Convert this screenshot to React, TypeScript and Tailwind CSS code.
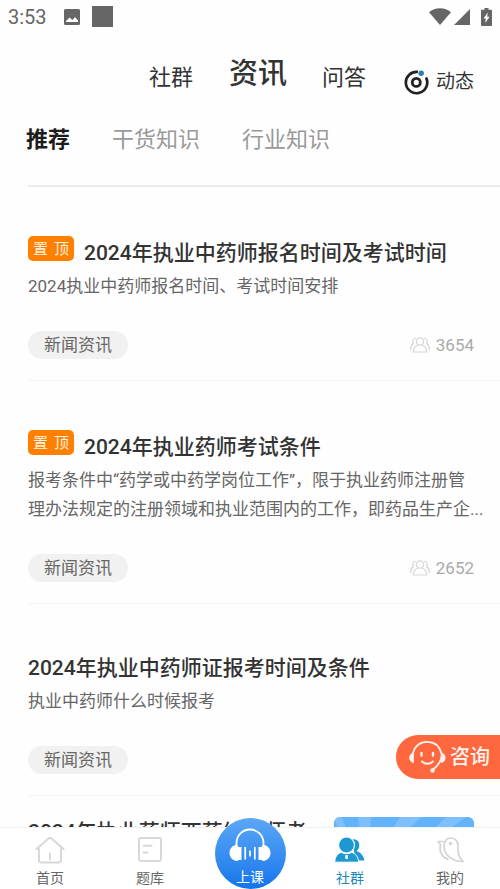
import React from 'react';

const articles = [
  {
    pinned: true,
    title: '2024年执业中药师报名时间及考试时间',
    desc: '2024执业中药师报名时间、考试时间安排',
    views: 3654,
  },
  {
    pinned: true,
    title: '2024年执业药师考试条件',
    desc: '报考条件中“药学或中药学岗位工作”，限于执业药师注册管\n理办法规定的注册领域和执业范围内的工作，即药品生产企...',
    views: 2652,
  },
  {
    pinned: false,
    title: '2024年执业中药师证报考时间及条件',
    desc: '执业中药师什么时候报考',
    views: null,
  },
];

function StatusBar() {
  return (
    <div className="flex h-8 items-center px-2 pt-px text-[#666]">
      <span className="text-xl leading-8">3:53</span>
      <svg className="ml-[17px] h-4 w-4" viewBox="0 0 16 16" fill="currentColor">
        <path fillRule="evenodd" d="M1.500 0h13A1.500 1.500 0 0 1 16 1.500v13a1.500 1.500 0 0 1-1.500 1.500h-13A1.500 1.500 0 0 1 0 14.500v-13A1.500 1.500 0 0 1 1.500 0zM2 13h12v-1.500L11 8 8.500 11 5.500 8.500 2 12z" />
      </svg>
      <span className="ml-3 h-[21px] w-[21px] bg-[#666]" />
      <div className="ml-auto flex items-center">
        <svg className="h-[17px] w-[22px]" viewBox="0 0 22 17" fill="currentColor">
          <path d="M0 4.200C6-1.200 16-1.200 22 4.200L11 17z" />
        </svg>
        <svg className="ml-[3px] h-4 w-4" viewBox="0 0 16 16" fill="currentColor">
          <path d="M16 0v16H0z" />
        </svg>
        <svg className="ml-[11px] h-[18px] w-[11px]" viewBox="0 0 11 18">
          <path fill="currentColor" d="M3.500 0h4v1.800H10a1 1 0 0 1 1 1V17a1 1 0 0 1-1 1H1a1 1 0 0 1-1-1V2.800a1 1 0 0 1 1-1h2.500z" />
          <path fill="#fff" d="M6.800 4.500 2.500 10.500h2.300L4.200 15 8.600 8.800H6.200z" />
        </svg>
      </div>
    </div>
  );
}

function PeopleIcon() {
  return (
    <svg className="h-4 w-5" viewBox="0 0 20 16" fill="none" stroke="#d6d6d6" strokeWidth="1.200" strokeLinecap="round" strokeLinejoin="round">
      <circle cx="10" cy="4.500" r="3.700" />
      <path d="M7.700 8C5 9 3.300 11.500 3.300 15h13.400c0-3.500-1.700-6-4.400-7" />
      <path d="M5.500 1.500C3 1.300 1.900 4.300 3.500 6.600 1.500 7.800.700 9.500.700 12.300M14.500 1.500c2.500-.200 3.600 2.800 2 5.100 2 1.200 2.800 2.900 2.800 5.700" />
    </svg>
  );
}

function Header() {
  return (
    <header className="flex h-[78px] items-start justify-end pr-[26px] text-[#333]">
      <nav className="flex">
        <a href="#community" className="mt-[30px] text-[22px] leading-8">社群</a>
        <a href="#news" className="mt-[22px] ml-9 text-[29px] leading-10 font-medium">资讯</a>
        <a href="#qa" className="mt-[30px] ml-[35px] text-[22px] leading-8">问答</a>
      </nav>
      <a href="#moments" className="mt-[34px] ml-[38px] flex items-center gap-[7px] text-[19px] leading-8">
        <svg className="h-[25px] w-[25px]" viewBox="0 0 25 25" fill="none" stroke="#222">
          <path d="M14 1.900A10.700 10.700 0 1 0 22 7.500" strokeWidth="2.700" />
          <circle cx="12.300" cy="12.400" r="4" strokeWidth="2.800" />
          <circle cx="17.200" cy="3.200" r="2.700" fill="#2384b0" stroke="none" />
        </svg>
        动态
      </a>
    </header>
  );
}

function Tabs() {
  return (
    <nav className="flex h-[75px] gap-[42px] pt-3.5 pl-[26px] text-[22px] leading-8 text-[#999]">
      <a href="#recommend" className="font-bold text-[#1c1c1c]">推荐</a>
      <a href="#tips">干货知识</a>
      <a href="#industry">行业知识</a>
    </nav>
  );
}

function Article({ item }: { item: (typeof articles)[number] }) {
  return (
    <article className="border-b border-[#f4f4f4] pt-[49px] pb-[21px]">
      <div className="flex items-start">
        {item.pinned && (
          <span className="mr-2.5 flex h-[25px] w-[46px] shrink-0 items-center justify-between rounded-[5px] bg-[#ff8000] px-[5px] text-[15px] leading-6 text-[#fff3e0]">
            <span>置</span>
            <span>顶</span>
          </span>
        )}
        <h2 className={`text-[21px] leading-[30px] font-medium text-[#333] ${item.pinned ? 'mt-0.5' : ''}`}>
          {item.title}
        </h2>
      </div>
      <p className="mt-1 text-[17px] leading-[29px] whitespace-pre-line text-[#666]">{item.desc}</p>
      <div className="mt-[30px] flex items-center justify-between pr-[26px]">
        <a href="#category" className="rounded-full bg-[#f1f1f1] px-4 text-[17px] leading-7 text-[#666]">新闻资讯</a>
        {item.views && (
          <span className="flex items-center gap-1.5 text-[17px] leading-7 text-[#aaa]">
            <PeopleIcon />
            {item.views}
          </span>
        )}
      </div>
    </article>
  );
}

function NextArticle() {
  return (
    <article className="flex items-start justify-between pt-5 pr-[26px]">
      <h2 className="mt-px text-[21px] leading-[30px] font-medium text-[#333]">2024年执业药师西药综合师考</h2>
      <svg className="mt-px h-24 w-[140px] rounded-md" viewBox="0 0 140 96">
        <rect width="140" height="96" fill="#63b2fc" />
        <g fill="#7dc0fd">
          <path d="M0 0h8l14 40H12z" />
          <path d="M24 0h13L33 60z" />
          <path d="M66 0h22L40 42z" />
          <path d="M112 0h20L50 60z" />
        </g>
      </svg>
    </article>
  );
}

function SupportButton() {
  return (
    <button className="absolute right-0 bottom-[110px] flex h-11 items-center rounded-l-full bg-[#ff683f] pr-2.5 pl-3 text-[20px] font-medium text-[#fff4ef]">
      <svg className="mr-1 h-[34px] w-[38px]" viewBox="0 0 38 34" fill="none" stroke="#fff4ef" strokeWidth="1.800" strokeLinecap="round">
        <path d="M5 13C7 6 12 1.800 19 1.800S31.500 6 33.500 13.500c1 6-3.500 12.500-9 16.500" />
        <path d="M5 13c-4.500 1.500-4.500 8 0 9.500z M34 13c4.200 1.500 4.200 8 0 9.500z" fill="#fff4ef" strokeWidth="1" />
        <path d="M13.500 13v2.500M25 13v2.500" strokeWidth="2.400" />
        <path d="M14 21.500c3 3 8 3 11 0" />
        <circle cx="24.500" cy="30.500" r="2.200" fill="#fff4ef" stroke="none" />
      </svg>
      咨询
    </button>
  );
}

function BottomNav() {
  const link = 'flex flex-col items-center pt-2 text-sm leading-5 text-[#666]';
  return (
    <nav className="relative grid h-[62px] grid-cols-5 border-t border-[#f0f0f0] bg-white">
      <a href="#home" className={link}>
        <svg className="mb-1 h-7 w-[30px]" viewBox="0 0 30 28" fill="none" stroke="#d8d8d8" strokeWidth="2" strokeLinecap="round" strokeLinejoin="round">
          <path d="M4 13H1.500L13.500 2.500q1.500-1.200 3 0l12 10.500H26V24q0 2.500-2.500 2.500h-17Q4 26.500 4 24z" />
          <path d="M15 17.500v6" />
        </svg>
        首页
      </a>
      <a href="#bank" className={link}>
        <svg className="mb-1 h-7 w-[30px]" viewBox="0 0 30 28" fill="none" stroke="#d8d8d8" strokeWidth="2" strokeLinecap="round">
          <rect x="4" y="2" width="22" height="23" rx="2" />
          <path d="M8.500 9.800h8M8.500 16.500h4" />
        </svg>
        题库
      </a>
      <a href="#class" className="flex justify-center text-sm leading-5 text-white">
        <span className="absolute bottom-0 flex h-[71px] w-[71px] flex-col items-center rounded-full bg-linear-to-b from-[#5ba7f7] to-[#0f75ea] pt-2.5">
          <svg className="mb-1.5 h-[33px] w-[42px]" viewBox="0 0 42 33" fill="none" stroke="#fff">
            <path d="M7.500 18.500V15a13.500 13.500 0 0 1 27 0v3.500" strokeWidth="1.800" />
            <path d="M12.500 19v13H9.500l-1.500 1C-2 32-2 18 8 16.800l1.500 2.200z M29.500 19v13h3l1.500 1C44 32 44 18 34 16.800L32.500 19z" fill="#fff" stroke="none" />
            <path d="M16.200 19v12.500M21 22.500v6M25.800 19v12.500" strokeWidth="1.700" />
          </svg>
          上课
        </span>
      </a>
      <a href="#community" className="flex flex-col items-center pt-2 text-sm leading-5 text-[#2088b9]">
        <svg className="mb-1 h-7 w-[30px]" viewBox="0 0 30 28" fill="#1e98d1">
          <path d="M17.500 3.500c4-.800 7.500 2.300 6.700 7-.400 2-1.500 3.500-2.700 4.500 4.500 1.500 7.500 5 7.800 9.500h-9z" />
          <circle cx="11.500" cy="9" r="8" stroke="#fff" strokeWidth="1.200" />
          <path fillRule="evenodd" d="M6.300 16.200c3 2 7.400 2 10.400 0 4.200 1.600 6.800 5 6.900 10H-.200c0-5 2.300-8.400 6.500-10zM10.800 19.500v3h1.600v-3z" stroke="#fff" strokeWidth="1" />
        </svg>
        社群
      </a>
      <a href="#mine" className={link}>
        <svg className="mb-1 h-7 w-[30px]" viewBox="0 0 30 28" fill="none" stroke="#d4d4d4" strokeWidth="1.700" strokeLinecap="round" strokeLinejoin="round">
          <path d="M28 25.500C17 25.500 9 19 9 10 9 5 12 2 16 2s7.500 3.500 7 8.500c-.500 6 .500 11 5 15z" />
          <path d="M8 5.500H3L5.500 8.500C4 15 6.500 20.500 13 23.500" />
          <circle cx="15.500" cy="7.500" r="1" fill="#d4d4d4" />
        </svg>
        我的
      </a>
    </nav>
  );
}

export default function App() {
  return (
    <div className="relative flex h-screen flex-col overflow-hidden bg-[#fefefe] font-[Roboto,'Noto_Sans_CJK_SC',sans-serif]">
      <StatusBar />
      <Header />
      <Tabs />
      <main className="ml-7 min-h-0 flex-1 overflow-y-auto border-t-2 border-[#ebebeb] [scrollbar-width:none]">
        {articles.map((item) => (
          <Article key={item.title} item={item} />
        ))}
        <NextArticle />
      </main>
      <SupportButton />
      <BottomNav />
    </div>
  );
}
